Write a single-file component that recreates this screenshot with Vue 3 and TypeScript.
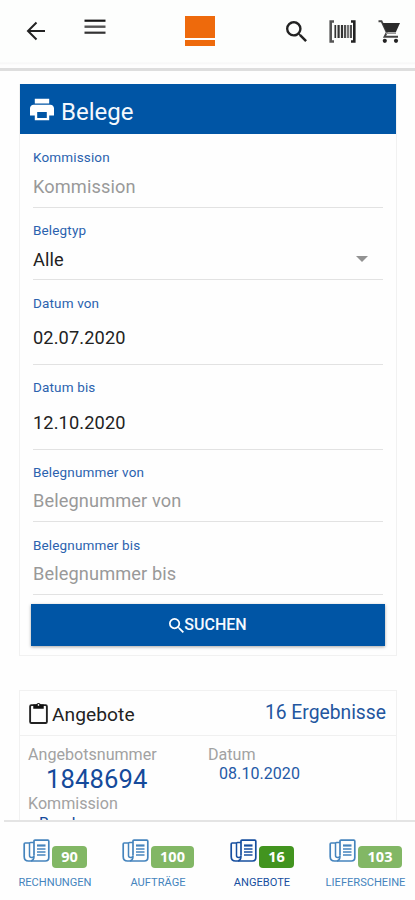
<script setup lang="ts">
interface Field {
  label: string
  text: string
  kind: 'input' | 'select' | 'date'
  filled: boolean
}

interface Tab {
  key: string
  label: string
  count: number
  active: boolean
}

const fields: Field[] = [
  { label: 'Kommission', text: 'Kommission', kind: 'input', filled: false },
  { label: 'Belegtyp', text: 'Alle', kind: 'select', filled: true },
  { label: 'Datum von', text: '02.07.2020', kind: 'date', filled: true },
  { label: 'Datum bis', text: '12.10.2020', kind: 'date', filled: true },
  { label: 'Belegnummer von', text: 'Belegnummer von', kind: 'input', filled: false },
  { label: 'Belegnummer bis', text: 'Belegnummer bis', kind: 'input', filled: false },
]

const tabs: Tab[] = [
  { key: 'rechnungen', label: 'RECHNUNGEN', count: 90, active: false },
  { key: 'auftraege', label: 'AUFTRÄGE', count: 100, active: false },
  { key: 'angebote', label: 'ANGEBOTE', count: 16, active: true },
  { key: 'lieferscheine', label: 'LIEFERSCHEINE', count: 103, active: false },
]
</script>

<template>
  <div class="screen">
    <header class="topbar">
      <svg class="back" viewBox="0 0 20 20"><path d="M19 10H2M10.500 1.500 2 10l8.500 8.500" fill="none" stroke="#222" stroke-width="2" /></svg>
      <svg class="menu" viewBox="0 0 22 16">
        <path d="M.5 1.700h21" stroke="#151515" stroke-width="2.200" />
        <path d="M.5 7.700h21" stroke="#555" stroke-width="2.400" />
        <path d="M.5 13.700h21" stroke="#333" stroke-width="2.200" />
      </svg>
      <div class="logo"><span class="logo-block"></span><span class="logo-bar"></span></div>
      <div class="actions">
        <svg class="search" viewBox="3 3 17.500 17.500"><path fill="#222" d="M15.500 14h-.79l-.28-.27A6.470 6.470 0 0 0 16 9.500 6.500 6.500 0 1 0 9.500 16c1.610 0 3.090-.59 4.230-1.570l.27.28v.79l5 4.990L20.490 19l-4.990-5zm-6 0C7.010 14 5 11.990 5 9.500S7.010 5 9.500 5 14 7.010 14 9.500 11.990 14 9.500 14z" /></svg>
        <svg class="barcode" viewBox="0 0 27 23">
          <path d="M5 1.500H1.700v20H5" fill="none" stroke="#555" stroke-width="2.600" />
          <path d="M22 1.500h3.300v20H22" fill="none" stroke="#222" stroke-width="2.600" />
          <path d="M6.300 5v13M16 5v13M22 5v13" stroke="#333" stroke-width="1.700" />
          <path d="M9.600 5v13M13 5v13" stroke="#333" stroke-width="2.200" />
          <path d="M19 5v13" stroke="#777" stroke-width="2.600" />
        </svg>
        <svg class="cart" viewBox="0 0 23 23">
          <path d="M.5 1.200h3l5.300 11.300-2.300 4.300h13.500" fill="none" stroke="#444" stroke-width="1.900" />
          <path d="M4.500 3H22l-4.200 9.300H8.600z" fill="#2b2b2b" />
          <path d="M8 13.200h10" stroke="#999" stroke-width="1.600" />
          <circle cx="6.800" cy="20.800" r="2.100" fill="#222" />
          <circle cx="18" cy="20.800" r="2.100" fill="#222" />
        </svg>
      </div>
    </header>

    <main class="content">
      <section class="card">
        <h1 class="card-title">
          <svg class="printer" viewBox="2 3 20 18"><path fill="#fff" d="M19 8H5c-1.660 0-3 1.340-3 3v6h4v4h12v-4h4v-6c0-1.660-1.340-3-3-3zm-3 11H8v-5h8v5zM18 3H6v4h12V3z" /></svg>
          <span>Belege</span>
        </h1>
        <form class="form" @submit.prevent>
          <div v-for="f in fields" :key="f.label" class="field" :class="f.kind">
            <label class="label">{{ f.label }}</label>
            <div class="value" :class="{ filled: f.filled }">
              <span>{{ f.text }}</span>
              <i v-if="f.kind === 'select'" class="caret"></i>
            </div>
          </div>
          <button class="submit" type="submit">
            <svg class="submit-icon" viewBox="3 3 17.500 17.500"><path fill="#fff" d="M15.500 14h-.79l-.28-.27A6.470 6.470 0 0 0 16 9.500 6.500 6.500 0 1 0 9.500 16c1.610 0 3.090-.59 4.230-1.570l.27.28v.79l5 4.990L20.490 19l-4.990-5zm-6 0C7.010 14 5 11.990 5 9.500S7.010 5 9.500 5 14 7.010 14 9.500 11.990 14 9.500 14z" /></svg>
            <span>SUCHEN</span>
          </button>
        </form>
      </section>

      <section class="card results">
        <div class="results-head">
          <svg class="clipboard" viewBox="0 0 18 21">
            <rect x="1" y="3" width="16" height="17" rx="1.200" fill="none" stroke="#222" stroke-width="1.800" />
            <path d="M4 2.500h2.800a2.300 2.300 0 0 1 4.400 0H14V6.500H4z" fill="#111" />
            <circle cx="9" cy="2.800" r=".8" fill="#fff" />
          </svg>
          <h2>Angebote</h2>
          <span class="total">16 Ergebnisse</span>
        </div>
        <div class="entry">
          <div class="col">
            <div class="key">Angebotsnummer</div>
            <div class="number">1848694</div>
            <div class="key">Kommission</div>
            <div class="person">Bernh</div>
          </div>
          <div class="col">
            <div class="key">Datum</div>
            <div class="date-value">08.10.2020</div>
          </div>
        </div>
      </section>
    </main>

    <nav class="tabs">
      <a v-for="t in tabs" :key="t.key" class="tab" :class="[t.key, { active: t.active }]">
        <span class="tab-top">
          <svg class="news" viewBox="0 0 27 24">
            <path d="M11 16.500V2.200q0-1 1-1h12.800q1 0 1 1v16.300q0 3.500-3.500 3.500H5.500Q1.200 22 1.200 17.500V5q0-1 1-1h4.300" fill="none" stroke="currentColor" stroke-width="1.700" />
            <path d="M11 3.500H7.500q-1 0-1 1v12q0 2 2.200 2t2.300-2v1.500q0 3-3 4" fill="none" stroke="currentColor" stroke-width="1.500" />
            <path d="M14 6.500h8.500" stroke="currentColor" stroke-width="2.200" />
            <path d="M14 10h8.500M14 13h8.500M14 16h8.500" stroke="currentColor" stroke-width="1.300" />
          </svg>
          <b class="badge">{{ t.count }}</b>
        </span>
        <span class="tab-label">{{ t.label }}</span>
      </a>
    </nav>
  </div>
</template>

<style>
body {
  margin: 0;
  background: #fefefe;
}
</style>

<style scoped>
.screen {
  display: flex;
  flex-direction: column;
  width: 415px;
  height: 900px;
  overflow: hidden;
  background: #fefefe;
  font-family: Roboto, "Liberation Sans", sans-serif;
  color: #222;
}
svg { display: block; flex: none; }
.topbar {
  box-sizing: border-box;
  flex: none;
  display: flex;
  align-items: flex-start;
  height: 71px;
  padding: 16px 14px 0 26px;
  border-bottom: 3px solid #dedede;
  background: linear-gradient(#fdfefd 0 62px, #f6f6f6 63px, #fefefe 65px);
}
.back { width: 20px; height: 20px; margin-top: 5px; }
.menu { width: 22px; height: 16px; margin: 3px 0 0 38px; }
.logo { display: flex; flex-direction: column; gap: 2px; width: 30px; margin-left: 79px; }
.logo-block { height: 22px; background: #ee6a0c; }
.logo-bar { height: 6px; background: #ee6a0c; }
.actions { display: flex; margin-left: auto; }
.search { width: 21px; height: 21px; margin-top: 5px; }
.barcode { width: 27px; height: 23px; margin: 4px 0 0 22px; }
.cart { width: 23px; height: 23px; margin: 4px 0 0 22px; }

.content { flex: 1; min-height: 0; overflow: hidden; padding: 13px 18px 0 19px; }
.card { box-sizing: border-box; border: 1px solid #f1f1f1; background: #fefefe; }
.card-title {
  display: flex;
  align-items: center;
  gap: 7px;
  height: 50px;
  margin: -1px 0 0;
  padding: 1px 10px 0;
  box-sizing: border-box;
  background: #0055a5;
  color: #f4f8fd;
  font-size: 24px;
  font-weight: 400;
  line-height: 28px;
}
.card-title span { padding-top: 4px; }
.printer { width: 24px; height: 23px; margin-top: -1px; }
.card:first-child { height: 572px; }
.form { display: flex; flex-direction: column; padding: 0 11px; }
.field {
  box-sizing: border-box;
  height: 73px;
  margin: 0 2px;
  padding-top: 15px;
  border-bottom: 1px solid #e2e2e2;
}
.field:first-child { height: 74px; padding-top: 15px; }
.field.select { height: 72px; padding-top: 14px; }
.field.date { height: 85px; padding-top: 14px; }
.field.select + .date { padding-top: 15px; }
.field.date + .input { height: 72px; padding-top: 14px; }
.label { display: block; font-size: 13.500px; line-height: 16px; letter-spacing: .15px; color: #2b62ae; }
.value {
  display: flex;
  align-items: center;
  justify-content: space-between;
  height: 20px;
  margin-top: 11px;
  font-size: 18.200px;
  line-height: 20px;
  letter-spacing: .12px;
  color: #999;
}
.value.filled { color: #222; }
.field:first-child .value { margin-top: 12px; }
.select .value { margin-top: 12px; }
.select .caret { margin-top: -2px; }
.date .value { margin-top: 18px; }
.select + .date .value { margin-top: 17px; }
.caret { margin-right: 15px; border: 6px solid transparent; border-top-color: #929292; border-bottom: 0; }
.submit {
  display: flex;
  align-items: center;
  justify-content: center;
  height: 42px;
  margin-top: 9px;
  padding: 0;
  border: 0;
  background: #0055a5;
  color: #f5f9ff;
  font: 500 16px/20px Roboto, sans-serif;
  box-shadow: 0 1px 3px rgba(0, 0, 0, .35);
}
.submit-icon { width: 15px; height: 15px; }

.results { height: 240px; margin-top: 34px; }
.results-head {
  box-sizing: border-box;
  display: flex;
  height: 45px;
  padding: 11px 10px 0 9px;
  border-bottom: 1px solid #f0f0f0;
}
.clipboard { width: 19px; height: 22px; }
.results h2 { margin: 2px 0 0 4px; font-size: 19.200px; line-height: 22px; font-weight: 400; letter-spacing: .05px; }
.total { margin-left: auto; font-size: 19.300px; line-height: 22px; color: #23569f; }
.entry { display: flex; padding: 9px 8px 0; }
.col:first-child { width: 180px; }
.key { font-size: 16.100px; line-height: 19px; color: #a2a2a2; }
.number { padding-left: 18px; font-size: 25.600px; line-height: 30px; letter-spacing: .1px; color: #154a9b; }
.person { margin-top: 1px; padding-left: 11px; font-size: 16px; line-height: 19px; color: #154a9b; }
.date-value { padding-left: 11px; font-size: 16px; line-height: 19px; letter-spacing: .06px; color: #2459a6; }

.tabs {
  box-sizing: border-box;
  flex: none;
  display: grid;
  grid-template-columns: 102px 104px 104px 103px;
  height: 80px;
  margin-left: 4px;
  padding-top: 17px;
  border-top: 2px solid #e4e4e4;
  background: #fefefe;
}
.tab { display: flex; flex-direction: column; align-items: center; color: #4584bd; }
.tab-top { display: flex; gap: 2px; height: 30px; }
.news { width: 27px; height: 24px; }
.badge {
  box-sizing: border-box;
  height: 22px;
  margin-top: 7px;
  padding: 0 9.500px;
  border-radius: 4px;
  background: #82b765;
  color: #fff;
  font: 700 14.500px/21px "Open Sans", sans-serif;
}
.tab-label { margin-top: 7px; font-size: 11.100px; line-height: 13px; white-space: nowrap; }
.active { color: #174f9f; }
.active .badge { background: #42941f; }
</style>
